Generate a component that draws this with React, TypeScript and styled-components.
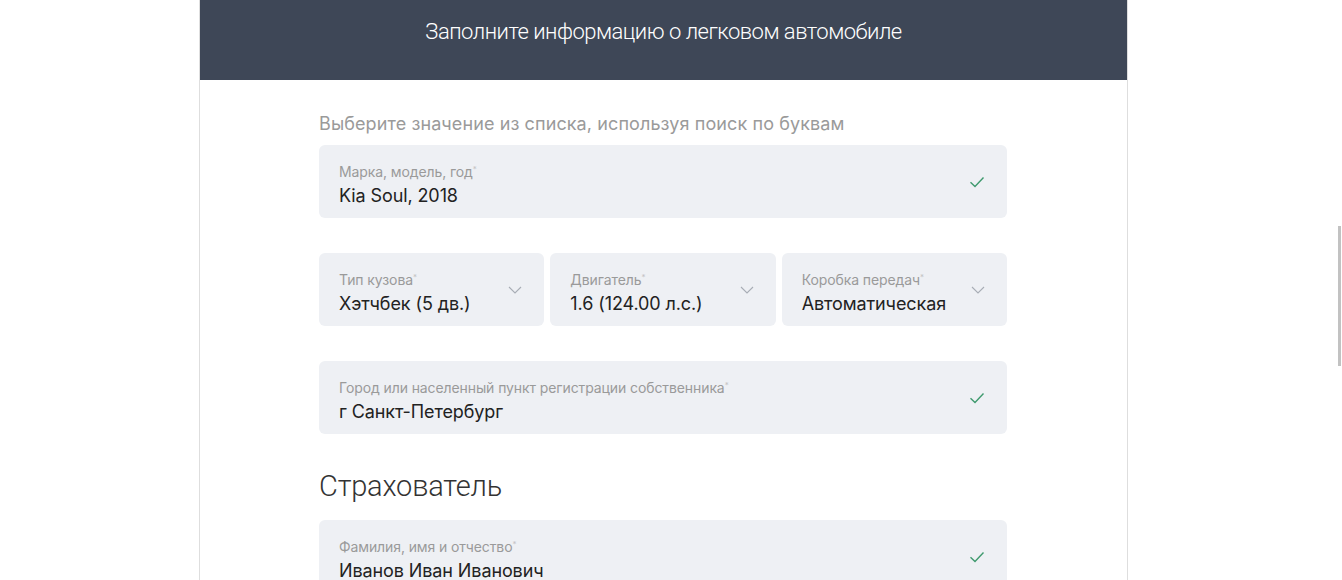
import React from "react";
import styled, { createGlobalStyle } from "styled-components";

const GlobalStyle = createGlobalStyle`
    html, body {
        margin: 0;
        padding: 0;
        background: #fff;
        overflow: hidden;
    }
    body {
        font-family: Inter, "Liberation Sans", Arial, sans-serif;
        color: #222;
    }
`

const Page = styled.div`
    display: flex;
    justify-content: center;
    padding-right: 15px;
    height: 580px;
`

const Card = styled.div`
    width: 927px;
    border-left: 1px solid #dedede;
    border-right: 1px solid #dedede;
    background: #fff;
`

const Header = styled.div`
    height: 80px;
    background: #3e4757;
    display: flex;
    align-items: center;
    justify-content: center;
`

const Title = styled.h1`
    margin: 0 0 17px;
    font-family: Roboto, "Liberation Sans", sans-serif;
    font-weight: 300;
    font-size: 22px;
    color: #fff;
    letter-spacing: -0.5px;
`

const Body = styled.div`
    padding: 32px 120px 0 119px;
    display: flex;
    flex-direction: column;
`

const Hint = styled.p`
    margin: 0 0 9px;
    font-size: 18px;
    line-height: 24px;
    color: #9a9a9a;
    letter-spacing: 0.1px;
`

const Field = styled.div<{ $gap?: number }>`
    height: 73px;
    flex-shrink: 0;
    background: #eef0f4;
    border-radius: 6px;
    display: flex;
    align-items: center;
    padding: 0 20px;
    margin-bottom: ${p => p.$gap ?? 35}px;
    box-sizing: border-box;
`

const Row = styled.div`
    display: grid;
    grid-template-columns: 1fr 1fr 1fr;
    gap: 6px;
    margin-bottom: 35px;
`

const Texts = styled.div`
    flex: 1;
    display: flex;
    flex-direction: column;
    padding-top: 5px;
`

const Label = styled.span`
    font-size: 14px;
    line-height: 17px;
    color: #9a9a9a;
    letter-spacing: -0.1px;
    sup {
        font-size: 8px;
        color: #c4c4c4;
        vertical-align: 5px;
    }
`

const Value = styled.span`
    margin-top: 4px;
    font-size: 18px;
    line-height: 24px;
    color: #222;
    letter-spacing: -0.1px;
`

const Heading = styled.h2`
    margin: 0 0 16px;
    font-family: Roboto, "Liberation Sans", sans-serif;
    font-weight: 300;
    font-size: 29px;
    line-height: 36px;
    color: #333;
    letter-spacing: -0.2px;
`

const IconBox = styled.span`
    display: flex;
    align-items: center;
    margin-right: 2px;
`

const Scroll = styled.div`
    position: fixed;
    right: 1px;
    top: 226px;
    width: 3px;
    height: 140px;
    background: #c2c2c2;
`

const Check = () => (
    <IconBox>
        <svg width="16" height="12" viewBox="0 0 16 12">
            <path d="M1.5 6.2 L6 10.5 L14.5 1.5" fill="none" stroke="#3f9a6e" strokeWidth="1.4" />
        </svg>
    </IconBox>
)

const Chevron = () => (
    <IconBox>
        <svg width="14" height="8" viewBox="0 0 14 8">
            <path d="M1 1 L7 7 L13 1" fill="none" stroke="#a8adb5" strokeWidth="1.1" />
        </svg>
    </IconBox>
)

const InputField = ({ label, value, icon, gap }: { label: string; value: string; icon: "check" | "chevron"; gap?: number }) => (
    <Field $gap={gap}>
        <Texts>
            <Label>{label}<sup>*</sup></Label>
            <Value>{value}</Value>
        </Texts>
        {icon === "check" ? <Check /> : <Chevron />}
    </Field>
)

export default function App() {
    return (
        <>
            <GlobalStyle />
            <Page>
                <Card>
                    <Header>
                        <Title>Заполните информацию о легковом автомобиле</Title>
                    </Header>
                    <Body>
                        <Hint>Выберите значение из списка, используя поиск по буквам</Hint>
                        <InputField label="Марка, модель, год" value="Kia Soul, 2018" icon="check" />
                        <Row>
                            <InputField label="Тип кузова" value="Хэтчбек (5 дв.)" icon="chevron" gap={0} />
                            <InputField label="Двигатель" value="1.6 (124.00 л.с.)" icon="chevron" gap={0} />
                            <InputField label="Коробка передач" value="Автоматическая" icon="chevron" gap={0} />
                        </Row>
                        <InputField label="Город или населенный пункт регистрации собственника" value="г Санкт-Петербург" icon="check" gap={34} />
                        <Heading>Страхователь</Heading>
                        <InputField label="Фамилия, имя и отчество" value="Иванов Иван Иванович" icon="check" />
                    </Body>
                </Card>
            </Page>
            <Scroll />
        </>
    )
}
